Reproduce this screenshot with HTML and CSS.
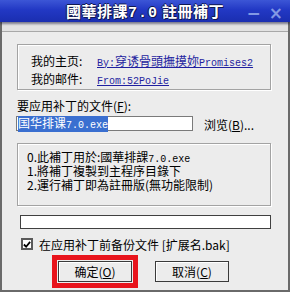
FILE: index.html
```html
<!DOCTYPE html>
<html>
<head>
<meta charset="utf-8">
<link rel="stylesheet" href="styles.css">
</head>
<body>
<div class="window">
  <div class="titlebar">
    <span class="spacer"></span>
    <span class="title">國華排課<span class="tmono">7.0</span> 註冊補丁</span>
    <span class="controls"><span class="min">−</span><span class="close">×</span></span>
  </div>
  <div class="band"></div>
  <div class="content">
    <div class="group info">
      <div class="row"><span class="label">我的主页:</span><a class="link"><span class="m">By:</span>穿诱骨頭撫摸妳<span class="m">Promises2</span></a></div>
      <div class="row"><span class="label">我的邮件:</span><a class="link"><span class="m">From:52PoJie</span></a></div>
    </div>
    <div class="filelabel">要应用补丁的文件(<u>F</u>):</div>
    <div class="filerow">
      <div class="input"><span class="sel">国华排课<span class="s">7.0.exe</span></span></div>
      <span class="browse">浏览(<u>B</u>)...</span>
    </div>
    <div class="group notes">
      <div class="line">0.此補丁用於:國華排課<span class="m">7.0.exe</span></div>
      <div class="line">1.將補丁複製到主程序目錄下</div>
      <div class="line">2.運行補丁即為註冊版(無功能限制)</div>
    </div>
    <div class="progress"></div>
    <label class="check"><span class="box"><svg width="9" height="9" viewBox="0 0 9 9"><path d="M1 4.5 L3.5 7 L8 1.5" fill="none" stroke="#000" stroke-width="2"/></svg></span>在应用补丁前备份文件 [扩展名.bak]</label>
    <div class="buttons">
      <div class="hl"><button class="btn">确定(<u>O</u>)</button></div>
      <button class="btn">取消(<u>C</u>)</button>
    </div>
  </div>
</div>
</body>
</html>
```

FILE: styles.css
```css
html, body {
  margin: 0;
  padding: 0;
}
body {
  width: 290px;
  height: 292px;
  overflow: hidden;
  font-family: "Noto Sans CJK SC", "Liberation Sans", sans-serif;
  font-size: 12px;
  color: #000;
}
.window {
  width: 290px;
  height: 292px;
  box-sizing: border-box;
  background: #ececec;
  border-left: 2px solid #6a6a6a;
  border-right: 2px solid #6a6a6a;
  border-bottom: 2px solid #6a6a6a;
  display: flex;
  flex-direction: column;
}
.titlebar {
  margin: 0 -2px;
  height: 22px;
  background: linear-gradient(180deg, #3c56d6 0%, #2238c4 45%, #1a2eb0 100%);
  display: grid;
  grid-template-columns: 50px 1fr 50px;
  align-items: center;
  box-shadow: 0 2px 2px rgba(0,0,40,0.45);
  position: relative;
  z-index: 1;
}
.title {
  text-align: center;
  color: #fff;
  font-family: "Noto Sans CJK TC", sans-serif;
  font-weight: bold;
  font-size: 15px;
  line-height: 22px;
  letter-spacing: 0.5px;
  text-shadow: 1px 1px 0 #101850, -1px 0 0 #101850, 0 -1px 0 #101850;
}
.tmono {
  font-family: "Liberation Mono", monospace;
  font-size: 15px;
  letter-spacing: 1px;
}
.controls {
  display: flex;
  gap: 8px;
  justify-content: flex-end;
  padding-right: 7px;
  color: #8298e4;
  font-family: "DejaVu Sans", sans-serif;
  font-weight: bold;
  font-size: 17px;
  line-height: 22px;
}
.band {
  height: 9px;
  background: #e2e2e2;
  border-bottom: 1px solid #a8a8a8;
}
.content {
  padding: 12px 0 0 15px;
  display: flex;
  flex-direction: column;
}
.group {
  width: 254px;
  border: 1px solid #a3a3a3;
  box-shadow: inset 1px 1px 0 #fff, 1px 1px 0 #fff;
}
.info {
  height: 46px;
  box-sizing: border-box;
  padding: 6px 0 0 13px;
}
.row {
  display: flex;
  height: 18px;
  align-items: center;
}
.label {
  width: 66px;
  font-size: 12px;
}
.link {
  color: #1f1fa0;
  text-decoration: underline;
  font-size: 12px;
  font-family: "Noto Sans CJK SC", sans-serif;
}
.m {
  font-family: "Liberation Mono", monospace;
  font-size: 10px;
}
.filelabel {
  margin-top: 8px;
  height: 16px;
  line-height: 16px;
}
.filerow {
  display: flex;
  align-items: center;
  margin-left: -1px;
}
.input {
  width: 177px;
  height: 15px;
  box-sizing: border-box;
  background: #fff;
  border: 1px solid #7a7a7a;
  padding-left: 1px;
  display: flex;
  align-items: center;
}
.sel {
  background: #3a6fd0;
  color: #fff;
  line-height: 13px;
  font-size: 12px;
}
.sel .s {
  font-family: "Liberation Mono", monospace;
  font-size: 10px;
}
.browse {
  margin-left: 11px;
  margin-top: 2px;
}
.notes {
  margin-top: 10px;
  height: 63px;
  box-sizing: border-box;
  padding: 6px 0 0 9px;
  font-size: 12px;
}
.line {
  height: 14px;
  line-height: 14px;
}
.progress {
  margin: 9px 0 0 3px;
  width: 251px;
  height: 14px;
  box-sizing: border-box;
  background: #fff;
  border: 1px solid #404040;
}
.check {
  display: flex;
  align-items: center;
  margin: 9px 0 0 4px;
  height: 12px;
  gap: 6px;
}
.box {
  width: 12px;
  height: 12px;
  box-sizing: border-box;
  border: 2px solid #5a5a5a;
  background: #fff;
  display: flex;
  align-items: center;
  justify-content: center;
}
.buttons {
  display: flex;
  align-items: center;
  margin: 5px 0 0 35px;
  gap: 17px;
}
.hl {
  border: 5px solid #e8141c;
  padding: 1px;
  display: flex;
}
.btn {
  width: 74px;
  height: 21px;
  box-sizing: border-box;
  background: #ececec;
  border: 1px solid #3a3a3a;
  box-shadow: inset 1px 1px 0 #fff;
  font-family: "Noto Sans CJK SC", sans-serif;
  font-size: 12px;
  padding: 0;
  color: #000;
  line-height: 18px;
}
```
